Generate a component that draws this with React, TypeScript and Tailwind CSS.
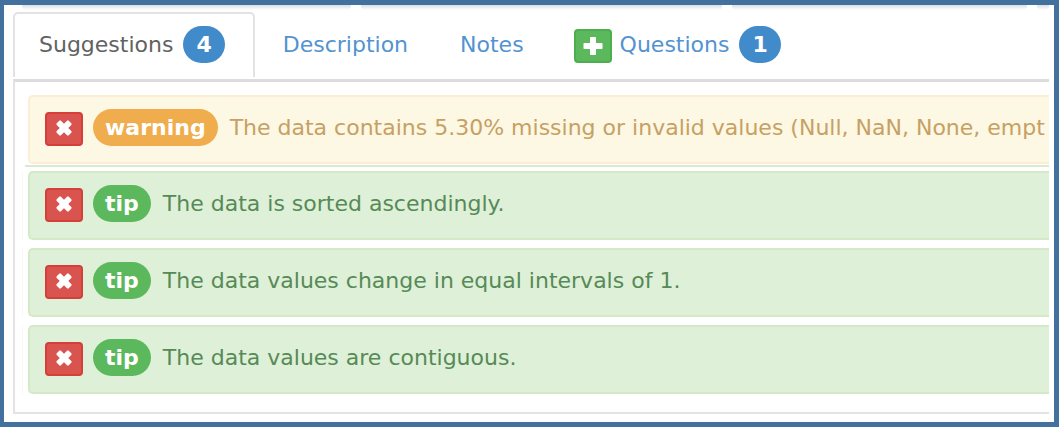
import type { ReactNode } from "react";

type Suggestion = { kind: "warning" | "tip"; text: string };

const suggestions: Suggestion[] = [
  {
    kind: "warning",
    text: "The data contains 5.30% missing or invalid values (Null, NaN, None, empt",
  },
  { kind: "tip", text: "The data is sorted ascendingly." },
  { kind: "tip", text: "The data values change in equal intervals of 1." },
  { kind: "tip", text: "The data values are contiguous." },
];

function CrossIcon() {
  return (
    <svg viewBox="0 0 18 18" className="h-[18px] w-[18px]" fill="currentColor" aria-hidden="true">
      <rect x="0.5" y="6" width="17" height="6" rx="1.2" transform="rotate(45 9 9)" />
      <rect x="0.5" y="6" width="17" height="6" rx="1.2" transform="rotate(-45 9 9)" />
    </svg>
  );
}

function PlusIcon() {
  return (
    <svg viewBox="0 0 20 20" className="h-5 w-5" fill="currentColor" aria-hidden="true">
      <rect x="0.5" y="7" width="19" height="6" rx="0.8" />
      <rect x="7" y="1" width="6" height="18" rx="0.8" />
    </svg>
  );
}

function Count({ children }: { children: ReactNode }) {
  return (
    <span className="flex h-[37px] items-center rounded-full bg-[#428bca] px-[13px] font-bold text-white">
      {children}
    </span>
  );
}

function SuggestionRow({ kind, text }: Suggestion) {
  const warning = kind === "warning";
  return (
    <li className={warning ? "pl-[6px]" : "border-l border-[#f6faf3] pl-[5px]"}>
      <div
        className={
          "flex h-[69px] items-center gap-3 overflow-hidden rounded-l-[5px] border-2 border-r-0 pl-[15px] whitespace-nowrap " +
          (warning
            ? "border-[#fbeed5] bg-[#fcf8e3] text-[#c7a063]"
            : "border-[#d6e9c6] bg-[#dff0d8] text-[#568a57]")
        }
      >
        <div className="flex shrink-0 items-end gap-[10px] pb-1">
          <button
            type="button"
            aria-label={"Dismiss " + kind}
            className="flex h-[34px] w-[38px] items-center justify-center rounded border-2 border-[#d43f3a] bg-[#d9534f] pb-[2px] text-white"
          >
            <CrossIcon />
          </button>
          <span
            className={
              "flex h-[37px] items-center rounded-full px-3 font-bold text-white " +
              (warning ? "bg-[#f0ad4e]" : "bg-[#5cb85c]")
            }
          >
            {kind}
          </span>
        </div>
        <span className="pb-1">{text}</span>
      </div>
    </li>
  );
}

function CardEdge({ className }: { className: string }) {
  return <div className={"h-[5px] rounded-b-sm bg-linear-to-b from-[#dedede] to-white " + className} />;
}

export default function App() {
  return (
    <div className="overflow-hidden border-[5px] border-l-4 border-[#42709f] bg-white pr-[5px] font-['DejaVu_Sans',sans-serif] text-[22px] leading-7">
      <div className="flex gap-[10px] pl-[18px]" aria-hidden="true">
        <CardEdge className="flex-[330]" />
        <CardEdge className="flex-[361]" />
        <CardEdge className="flex-[296]" />
        <CardEdge className="flex-[12]" />
      </div>

      <nav className="flex pt-[2px] pl-[9px] text-[#5293d0]">
        <a
          href="#suggestions"
          aria-current="page"
          className="flex h-[65px] items-center gap-[10px] rounded-t-[5px] border-2 border-b-0 border-[#e2e2e2] pr-7 pb-[2px] pl-6 text-[#626262]"
        >
          Suggestions
          <Count>4</Count>
        </a>
        <a href="#description" className="flex h-[65px] items-center pr-[26px] pl-7">
          Description
        </a>
        <a href="#notes" className="flex h-[65px] items-center px-[26px]">
          Notes
        </a>
        <div className="flex h-[65px] items-center gap-2 pl-6">
          <div className="flex pt-[2px]">
            <button
              type="button"
              aria-label="Add question"
              className="flex h-[34px] w-[38px] items-center justify-center rounded border-2 border-[#4cae4c] bg-[#5cb85c] text-white"
            >
              <PlusIcon />
            </button>
          </div>
          <a href="#questions" className="flex items-center gap-[10px]">
            Questions
            <Count>1</Count>
          </a>
        </div>
      </nav>

      <main className="mt-[2px] mb-2 ml-[9px] border-t-[3px] border-b-2 border-l-2 border-t-[#dcdcdc] border-b-[#e3e3e3] border-l-[#e3e3e3] pt-[13px] pb-[18px] pl-[7px]">
        <ul>
          <SuggestionRow {...suggestions[0]} />
        </ul>
        <hr className="mt-px mb-1 ml-[3px] border-t-2 border-[#d9ebcb]" />
        <ul className="flex flex-col gap-2">
          {suggestions.slice(1).map((s) => (
            <SuggestionRow key={s.text} {...s} />
          ))}
        </ul>
      </main>
    </div>
  );
}
